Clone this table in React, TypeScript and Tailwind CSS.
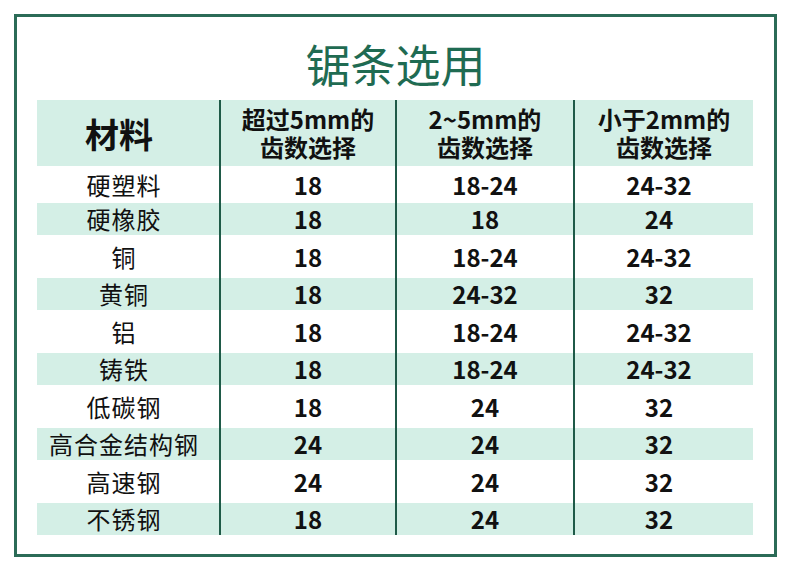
import React from "react";

const rows = [
  { name: "硬塑料", a: "18", b: "18-24", c: "24-32" },
  { name: "硬橡胶", a: "18", b: "18", c: "24" },
  { name: "铜", a: "18", b: "18-24", c: "24-32" },
  { name: "黄铜", a: "18", b: "24-32", c: "32" },
  { name: "铝", a: "18", b: "18-24", c: "24-32" },
  { name: "铸铁", a: "18", b: "18-24", c: "24-32" },
  { name: "低碳钢", a: "18", b: "24", c: "32" },
  { name: "高合金结构钢", a: "24", b: "24", c: "32" },
  { name: "高速钢", a: "24", b: "24", c: "32" },
  { name: "不锈钢", a: "18", b: "24", c: "32" },
];

const grid = "grid grid-cols-[182px_176px_178px_180px]";
const divider = "border-l-2 border-[#1f5a48]";

export default function App() {
  return (
    <div
      className="w-[790px] h-[569px] bg-white pt-[14px] pl-[14px]"
      style={{ fontFamily: '"Noto Sans CJK SC", "Noto Sans", sans-serif' }}
    >
      <div className="w-[763px] h-[543px] border-[3px] border-[#2b6b57] px-[20px]">
        <div className="h-[83px] flex items-center justify-center pt-[9px]">
          <h1 className="text-[45px] leading-none text-[#1f6b52] font-normal">锯条选用</h1>
        </div>

        <div className="w-[716px]">
          {/* header */}
          <div className={`${grid} h-[66px] bg-[#d4efe6] text-[#111] font-bold`}>
            <div className="flex items-center justify-center pr-[18px] text-[34px]">材料</div>
            <div className={`${divider} flex flex-col items-center justify-center text-[24px] leading-[28px]`}>
              <span>超过5mm的</span>
              <span>齿数选择</span>
            </div>
            <div className={`${divider} flex flex-col items-center justify-center text-[24px] leading-[28px]`}>
              <span>2~5mm的</span>
              <span>齿数选择</span>
            </div>
            <div className={`${divider} flex flex-col items-center justify-center text-[24px] leading-[28px]`}>
              <span>小于2mm的</span>
              <span>齿数选择</span>
            </div>
          </div>

          {rows.map((r, i) => {
            const green = i % 2 === 1;
            const h = i === 0 ? "h-[37px]" : green ? "h-[32px]" : "h-[43px]";
            return (
              <div
                key={r.name}
                className={`${grid} ${green ? "bg-[#d4efe6]" : "bg-white"} text-[24px] text-[#111]`}
              >
                <div className={`${h} flex items-center justify-center pr-[8px] tracking-[1px]`}>{r.name}</div>
                <div className={`${h} ${divider} flex items-center justify-center font-bold`}>{r.a}</div>
                <div className={`${h} ${divider} flex items-center justify-center font-bold`}>{r.b}</div>
                <div className={`${h} ${divider} flex items-center justify-center pr-[10px] font-bold`}>{r.c}</div>
              </div>
            );
          })}
        </div>
      </div>
    </div>
  );
}
